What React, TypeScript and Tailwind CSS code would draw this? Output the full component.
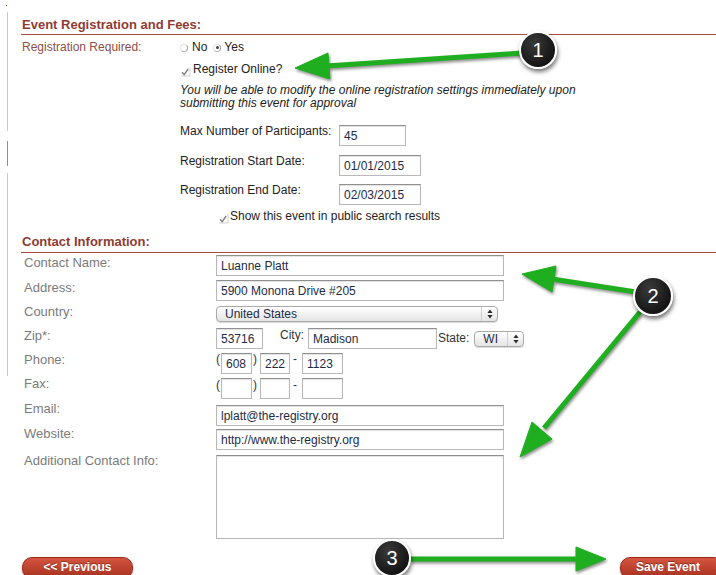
import React from 'react';

// Plain inset text box, as the old registration form renders it
function TextBox({ value = '', className = '' }: { value?: string; className?: string }) {
  return (
    <div
      className={`h-[21px] overflow-hidden whitespace-nowrap border border-[#b8b8b8] border-t-[#909090] bg-white pl-[4px] pt-[3px] text-[12px] leading-[14px] text-[#1d2b45] shadow-[inset_0_1px_1px_rgba(0,0,0,0.12)] ${className}`}
    >
      {value}
    </div>
  );
}

// Rounded select with the little up/down stepper on the right
function SelectBox({ value, className = '', textPad = 'pl-[8px]' }: { value: string; className?: string; textPad?: string }) {
  return (
    <div
      className={`flex h-[16px] items-center rounded-[4px] border border-[#a9a9a9] bg-linear-to-b from-white to-[#e4e4e4] shadow-[0_1px_1px_rgba(0,0,0,0.15)] ${className}`}
    >
      <span className={`flex-1 text-[12px] leading-[14px] text-[#1d2b45] ${textPad}`}>{value}</span>
      <span className="flex h-full w-[16px] items-center justify-center border-l border-[#cfcfcf]">
        <svg width="6" height="10" viewBox="0 0 6 10">
          <path d="M3 0.5 L5.6 4 H0.4Z M3 9.5 L5.6 6 H0.4Z" fill="#2b2b2b" />
        </svg>
      </span>
    </div>
  );
}

function Radio({ checked = false }: { checked?: boolean }) {
  return (
    <span className="flex h-[8px] w-[8px] items-center justify-center rounded-full border border-[#e2e2e2] border-r-[#9a9a9a] border-b-[#b5b5b5] bg-white">
      {checked && <span className="h-[3px] w-[3px] rounded-full bg-[#444]" />}
    </span>
  );
}

function Check() {
  return (
    <svg width="11" height="11" viewBox="0 0 11 11" className="mt-[4px]">
      <path d="M10 1 V10 H1" stroke="#d2d2d2" strokeWidth="1" fill="none" />
      <path d="M2 6.2 L4.2 8.6 L8.2 3" stroke="#7d7d7d" strokeWidth="1.4" fill="none" />
    </svg>
  );
}

function Button({ label, className = '' }: { label: string; className?: string }) {
  return (
    <div
      className={`h-[22px] rounded-[10px] border border-[#9a2a1c] bg-linear-to-b from-[#d5553f] to-[#a6301f] text-center text-[12px] font-bold leading-[19px] text-white shadow-[0_1px_2px_rgba(0,0,0,0.35)] [text-shadow:0_-1px_0_rgba(0,0,0,0.35)] ${className}`}
    >
      {label}
    </div>
  );
}

const contactLabel = 'w-[195px] shrink-0 pl-[3px] text-[13px] leading-[16px] text-[#7b7b7b]';

function Callout({ n, className }: { n: string; className: string }) {
  return (
    <div
      className={`absolute flex items-center justify-center rounded-full border-2 border-white bg-radial-[at_40%_30%] from-[#3a3a3a] to-[#050505] text-[20px] leading-none text-white shadow-[1px_3px_4px_rgba(0,0,0,0.55)] ${className}`}
    >
      {n}
    </div>
  );
}

export default function App() {
  return (
    <div className="relative h-[575px] w-[716px] overflow-hidden bg-white font-['Liberation_Sans',Arial,Helvetica,sans-serif] text-[#222]">
      <div className="flex">
        {/* left edge of the page frame */}
        <div className="flex w-[8px] shrink-0 flex-col">
          <div className="ml-[6px] mt-[5px] h-[1px] w-[1px] bg-[#b44a3e]" />
          <div className="mt-[6px] h-[119px] border-r border-[#c9c9c9]" />
          <div className="mt-[10px] h-[25px] border-r border-[#c27a74]" />
          <div className="mt-[7px] h-[203px] border-r border-[#c9c9c9]" />
        </div>

        <div className="flex-1 pl-[13px]">
          {/* Event registration */}
          <h2 className="border-b border-[#a64b40] pb-[2px] pl-[1px] pt-[17px] text-[13px] font-bold leading-[15px] text-[#8e3b32]">
            Event Registration and Fees:
          </h2>
          <div className="mt-[5px] flex">
            <div className="w-[159px] shrink-0 pl-[1px] text-[12px] leading-[15px] text-[#8d4f48]">Registration Required:</div>
            <div className="flex flex-col text-[12px] leading-[15px]">
              <div className="flex h-[15px] items-center">
                <Radio />
                <span className="ml-[4px]">No</span>
                <span className="ml-[6px]">
                  <Radio checked />
                </span>
                <span className="ml-[3px]">Yes</span>
              </div>
              <div className="mt-[7px] flex items-start">
                <Check />
                <span className="ml-[2px]">Register Online?</span>
              </div>
              <p className="mt-[7px] text-[12px] italic leading-[13px]">
                You will be able to modify the online registration settings immediately upon
                <br />
                submitting this event for approval
              </p>

              <div className="mt-[14px] flex items-start">
                <span className="w-[159px]">Max Number of Participants:</span>
                <TextBox value="45" className="mt-[1px] w-[67px]" />
              </div>
              <div className="mt-[8px] flex items-start">
                <span className="w-[159px]">Registration Start Date:</span>
                <TextBox value="01/01/2015" className="mt-[1px] w-[82px]" />
              </div>
              <div className="mt-[7px] flex items-start">
                <span className="w-[159px]">Registration End Date:</span>
                <TextBox value="02/03/2015" className="mt-[1px] w-[82px]" />
              </div>
              <div className="mt-[4px] flex items-start pl-[38px]">
                <Check />
                <span className="ml-[1px]">Show this event in public search results</span>
              </div>
            </div>
          </div>

          {/* Contact information */}
          <h2 className="mt-[10px] border-b border-[#a64b40] pb-[3px] pl-[1px] text-[13px] font-bold leading-[15px] text-[#8e3b32]">
            Contact Information:
          </h2>

          <div className="mt-[2px] flex items-start">
            <span className={contactLabel}>Contact Name:</span>
            <TextBox value="Luanne Platt" className="w-[288px]" />
          </div>
          <div className="mt-[4px] flex items-start">
            <span className={contactLabel}>Address:</span>
            <TextBox value="5900 Monona Drive #205" className="w-[288px]" />
          </div>
          <div className="mt-[3px] flex items-start">
            <span className={contactLabel}>Country:</span>
            <SelectBox value="United States" className="mt-[2px] w-[282px]" />
          </div>
          <div className="mt-[6px] flex items-start text-[12px] leading-[15px] text-[#333]">
            <span className={contactLabel}>Zip*:</span>
            <TextBox value="53716" className="w-[47px]" />
            <span className="ml-[17px]">City:</span>
            <TextBox value="Madison" className="ml-[4px] w-[129px]" />
            <span className="ml-[1px] mt-[3px]">State:</span>
            <SelectBox value="WI" textPad="pl-[8px]" className="ml-[5px] mt-[3px] w-[50px]" />
          </div>
          <div className="mt-[3px] flex items-start text-[12px] leading-[14px] text-[#333]">
            <span className={contactLabel}>Phone:</span>
            <span>(</span>
            <TextBox value="608" className="ml-[1px] mt-[1px] w-[31px] pl-[2px]" />
            <span className="ml-[1px]">)</span>
            <TextBox value="222" className="ml-[3px] mt-[1px] w-[30px]" />
            <span className="ml-[3px]">-</span>
            <TextBox value="1123" className="ml-[5px] mt-[1px] w-[41px]" />
          </div>
          <div className="mt-[2px] flex items-start text-[12px] leading-[14px] text-[#333]">
            <span className={contactLabel}>Fax:</span>
            <span className="mt-[2px]">(</span>
            <TextBox className="ml-[1px] mt-[2px] w-[31px]" />
            <span className="ml-[1px] mt-[2px]">)</span>
            <TextBox className="ml-[3px] mt-[2px] w-[30px]" />
            <span className="ml-[3px] mt-[2px]">-</span>
            <TextBox className="ml-[5px] mt-[2px] w-[41px]" />
          </div>
          <div className="mt-[2px] flex items-start">
            <span className={contactLabel}>Email:</span>
            <TextBox value="lplatt@the-registry.org" className="mt-[4px] w-[288px]" />
          </div>
          <div className="flex items-start">
            <span className={contactLabel}>Website:</span>
            <TextBox value="http://www.the-registry.org" className="mt-[3px] w-[288px]" />
          </div>
          <div className="mt-[3px] flex items-start">
            <span className={contactLabel}>Additional Contact Info:</span>
            <div className="mt-[2px] h-[84px] w-[288px] border border-[#b8b8b8] border-t-[#909090] bg-white shadow-[inset_0_1px_1px_rgba(0,0,0,0.12)]" />
          </div>

          <div className="mt-[18px] flex justify-between">
            <Button label="<< Previous" className="ml-[1px] w-[111px]" />
            <Button label="Save Event" className="-mr-[8px] w-[104px] pr-[8px]" />
          </div>
        </div>
      </div>

      {/* step arrows */}
      <svg
        className="pointer-events-none absolute left-0 top-0 drop-shadow-[1px_2px_1.5px_rgba(0,0,0,0.45)]"
        width="716"
        height="575"
        viewBox="0 0 716 575"
      >
        <g fill="#1fae1f" stroke="#1fae1f" strokeLinejoin="round">
          <line x1="522" y1="53" x2="326" y2="66" strokeWidth="5" />
          <polygon points="295,68 330,79 328,53" strokeWidth="1" />

          <line x1="636" y1="292" x2="552" y2="279" strokeWidth="5" />
          <polygon points="522,274 552,292 556,266" strokeWidth="1" />

          <line x1="640" y1="312" x2="544" y2="428" strokeWidth="5" />
          <polygon points="520,457 552,439 532,422" strokeWidth="1" />

          <line x1="410" y1="559" x2="578" y2="559" strokeWidth="5" />
          <polygon points="606,559 576,547 576,571" strokeWidth="1" />
        </g>
      </svg>

      <Callout n="1" className="left-[519px] top-[31px] h-[38px] w-[38px]" />
      <Callout n="2" className="left-[633px] top-[276px] h-[40px] w-[40px]" />
      <Callout n="3" className="left-[373px] top-[539px] h-[38px] w-[38px]" />
    </div>
  );
}
